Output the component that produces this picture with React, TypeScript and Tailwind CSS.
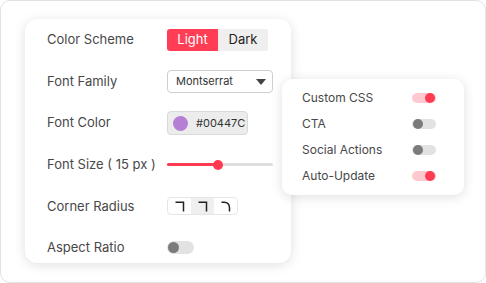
import React from "react";

function Toggle({ on, size = "sm" }: { on: boolean; size?: "sm" | "md" }) {
  const track = size === "md" ? "w-[27px] h-[13px]" : "w-[24px] h-[10px]";
  const knob = size === "md" ? "w-[11px] h-[11px]" : "w-[10px] h-[10px]";
  return (
    <div
      className={`${track} rounded-full flex items-center px-[1px] ${
        on ? "bg-[#ffc9d0] justify-end" : "bg-[#e2e2e2] justify-start"
      }`}
    >
      <div className={`${knob} rounded-full ${on ? "bg-[#ff3b52]" : "bg-[#7b7b7b]"}`} />
    </div>
  );
}

function Corner({ rounded }: { rounded?: boolean }) {
  return (
    <svg width="10" height="11" viewBox="0 0 10 11" fill="none">
      {rounded ? (
        <path d="M0.5 1.2 H3 Q8.5 1.2 8.5 7 V10.5" stroke="#222" strokeWidth="1.5" />
      ) : (
        <path d="M0.5 1.2 H8.5 V10.5" stroke="#222" strokeWidth="1.5" />
      )}
    </svg>
  );
}

function Row({ label, children }: { label: string; children?: React.ReactNode }) {
  return (
    <div className="flex items-center h-[22px]">
      <div className="w-[120px] text-[13px] text-[#484848]">{label}</div>
      {children}
    </div>
  );
}

export default function App() {
  return (
    <div className="w-[486px] h-[283px] bg-white" style={{ fontFamily: "Inter, 'Noto Sans', sans-serif" }}>
      <div className="w-[486px] h-[283px] border border-[#e2e2e2] rounded-[10px] flex items-start">
        {/* Main settings card */}
        <div className="ml-[24px] mt-[18px] w-[266px] h-[244px] bg-white rounded-[12px] shadow-[0_2px_12px_rgba(0,0,0,0.13)] pl-[22px] pt-[10px] flex flex-col gap-[19.6px] shrink-0">
          <Row label="Color Scheme">
            <div className="flex h-[22px] w-[101px] rounded-[3px] overflow-hidden text-[13px]">
              <div className="w-[51px] bg-[#ff3d55] text-white flex items-center justify-center">Light</div>
              <div className="flex-1 bg-[#efefef] text-[#222] flex items-center justify-center">Dark</div>
            </div>
          </Row>
          <Row label="Font Family">
            <div className="w-[106px] h-[23px] border border-[#cfcfcf] rounded-[4px] flex items-center justify-between pl-[8px] pr-[6px] text-[11px] text-[#333]">
              <span>Montserrat</span>
              <svg width="10" height="6" viewBox="0 0 10 6">
                <path d="M0 0 H10 L5 6 Z" fill="#444" />
              </svg>
            </div>
          </Row>
          <Row label="Font Color">
            <div className="w-[81px] h-[24px] bg-[#ececec] border border-[#d9d9d9] rounded-[4px] flex items-center pl-[5px] gap-[8px] text-[11px] text-[#333]">
              <div className="w-[15px] h-[15px] rounded-full bg-[#b67fd6]" />
              <span>#00447C</span>
            </div>
          </Row>
          <Row label="Font Size ( 15 px )">
            <div className="relative w-[106px] h-[10px] flex items-center">
              <div className="w-full h-[3px] rounded-full bg-[#dedede]" />
              <div className="absolute left-0 top-[3.5px] w-[51px] h-[3px] rounded-full bg-[#ff3b52]" />
              <div className="absolute left-[46px] top-0 w-[10px] h-[10px] rounded-full bg-[#ff3b52]" />
            </div>
          </Row>
          <Row label="Corner Radius">
            <div className="w-[71px] h-[18px] border border-[#e6e6e6] rounded-[4px] overflow-hidden flex">
              <div className="flex-1 flex items-center justify-center">
                <Corner />
              </div>
              <div className="flex-1 flex items-center justify-center bg-[#efefef]">
                <Corner />
              </div>
              <div className="flex-1 flex items-center justify-center">
                <Corner rounded />
              </div>
            </div>
          </Row>
          <Row label="Aspect Ratio">
            <Toggle on={false} size="md" />
          </Row>
        </div>

        {/* Feature toggles card */}
        <div className="-ml-[9px] mt-[78px] w-[182px] h-[116px] bg-white rounded-[10px] shadow-[0_2px_12px_rgba(0,0,0,0.13)] pl-[20px] pr-[28px] py-[6px] flex flex-col shrink-0 relative">
          {[
            ["Custom CSS", true],
            ["CTA", false],
            ["Social Actions", false],
            ["Auto-Update", true],
          ].map(([label, on]) => (
            <div key={label as string} className="h-[26px] flex items-center justify-between">
              <span className="text-[12px] text-[#484848]">{label as string}</span>
              <Toggle on={on as boolean} />
            </div>
          ))}
        </div>
      </div>
    </div>
  );
}
